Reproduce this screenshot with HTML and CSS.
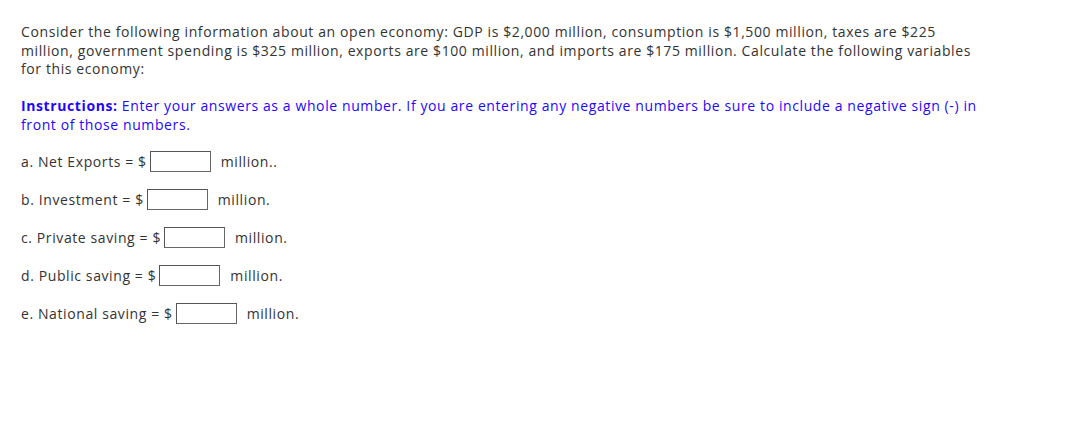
FILE: index.html
```html
<!DOCTYPE html>
<html>
<head>
<meta charset="utf-8">
<link rel="stylesheet" href="styles.css">
</head>
<body>
<div class="question">
  <p class="intro">Consider the following information about an open economy: GDP is $2,000 million, consumption is $1,500 million, taxes are $225 million, government spending is $325 million, exports are $100 million, and imports are $175 million. Calculate the following variables for this economy:</p>
  <p class="instructions"><strong>Instructions:</strong> Enter your answers as a whole number. If you are entering any negative numbers be sure to include a negative sign (-) in front of those numbers.</p>
  <div class="answers">
    <div class="row"><span>a. Net Exports = $</span><input class="box" type="text"><span class="unit">million..</span></div>
    <div class="row"><span>b. Investment = $</span><input class="box" type="text"><span class="unit">million.</span></div>
    <div class="row"><span>c. Private saving = $</span><input class="box" type="text"><span class="unit">million.</span></div>
    <div class="row"><span>d. Public saving = $</span><input class="box" type="text"><span class="unit">million.</span></div>
    <div class="row"><span>e. National saving = $</span><input class="box" type="text"><span class="unit">million.</span></div>
  </div>
</div>
</body>
</html>
```
FILE: styles.css
```css
html, body {
  margin: 0;
  padding: 0;
  background: #fff;
}
body {
  font-family: "Open Sans", "Liberation Sans", sans-serif;
  font-size: 14px;
  letter-spacing: 0.6px;
  color: #333;
}
.question {
  padding: 23px 21px 0 21px;
  width: 960px;
}
.intro {
  margin: 0;
  line-height: 18.5px;
}
.instructions {
  margin: 17px 0 0 0;
  line-height: 19px;
  color: #1f06ff;
}
.instructions strong {
  font-weight: 700;
}
.answers {
  margin-top: 16.5px;
  display: flex;
  flex-direction: column;
  gap: 16px;
}
.row {
  display: flex;
  align-items: center;
  height: 22px;
}
.box {
  box-sizing: border-box;
  width: 61px;
  height: 21px;
  margin: 0 0 0 3px;
  padding: 0;
  border: 1px solid #666;
  border-top-color: #555;
  border-left-color: #555;
  background: #fff;
  font: inherit;
}
.unit {
  margin-left: 10px;
}
```
